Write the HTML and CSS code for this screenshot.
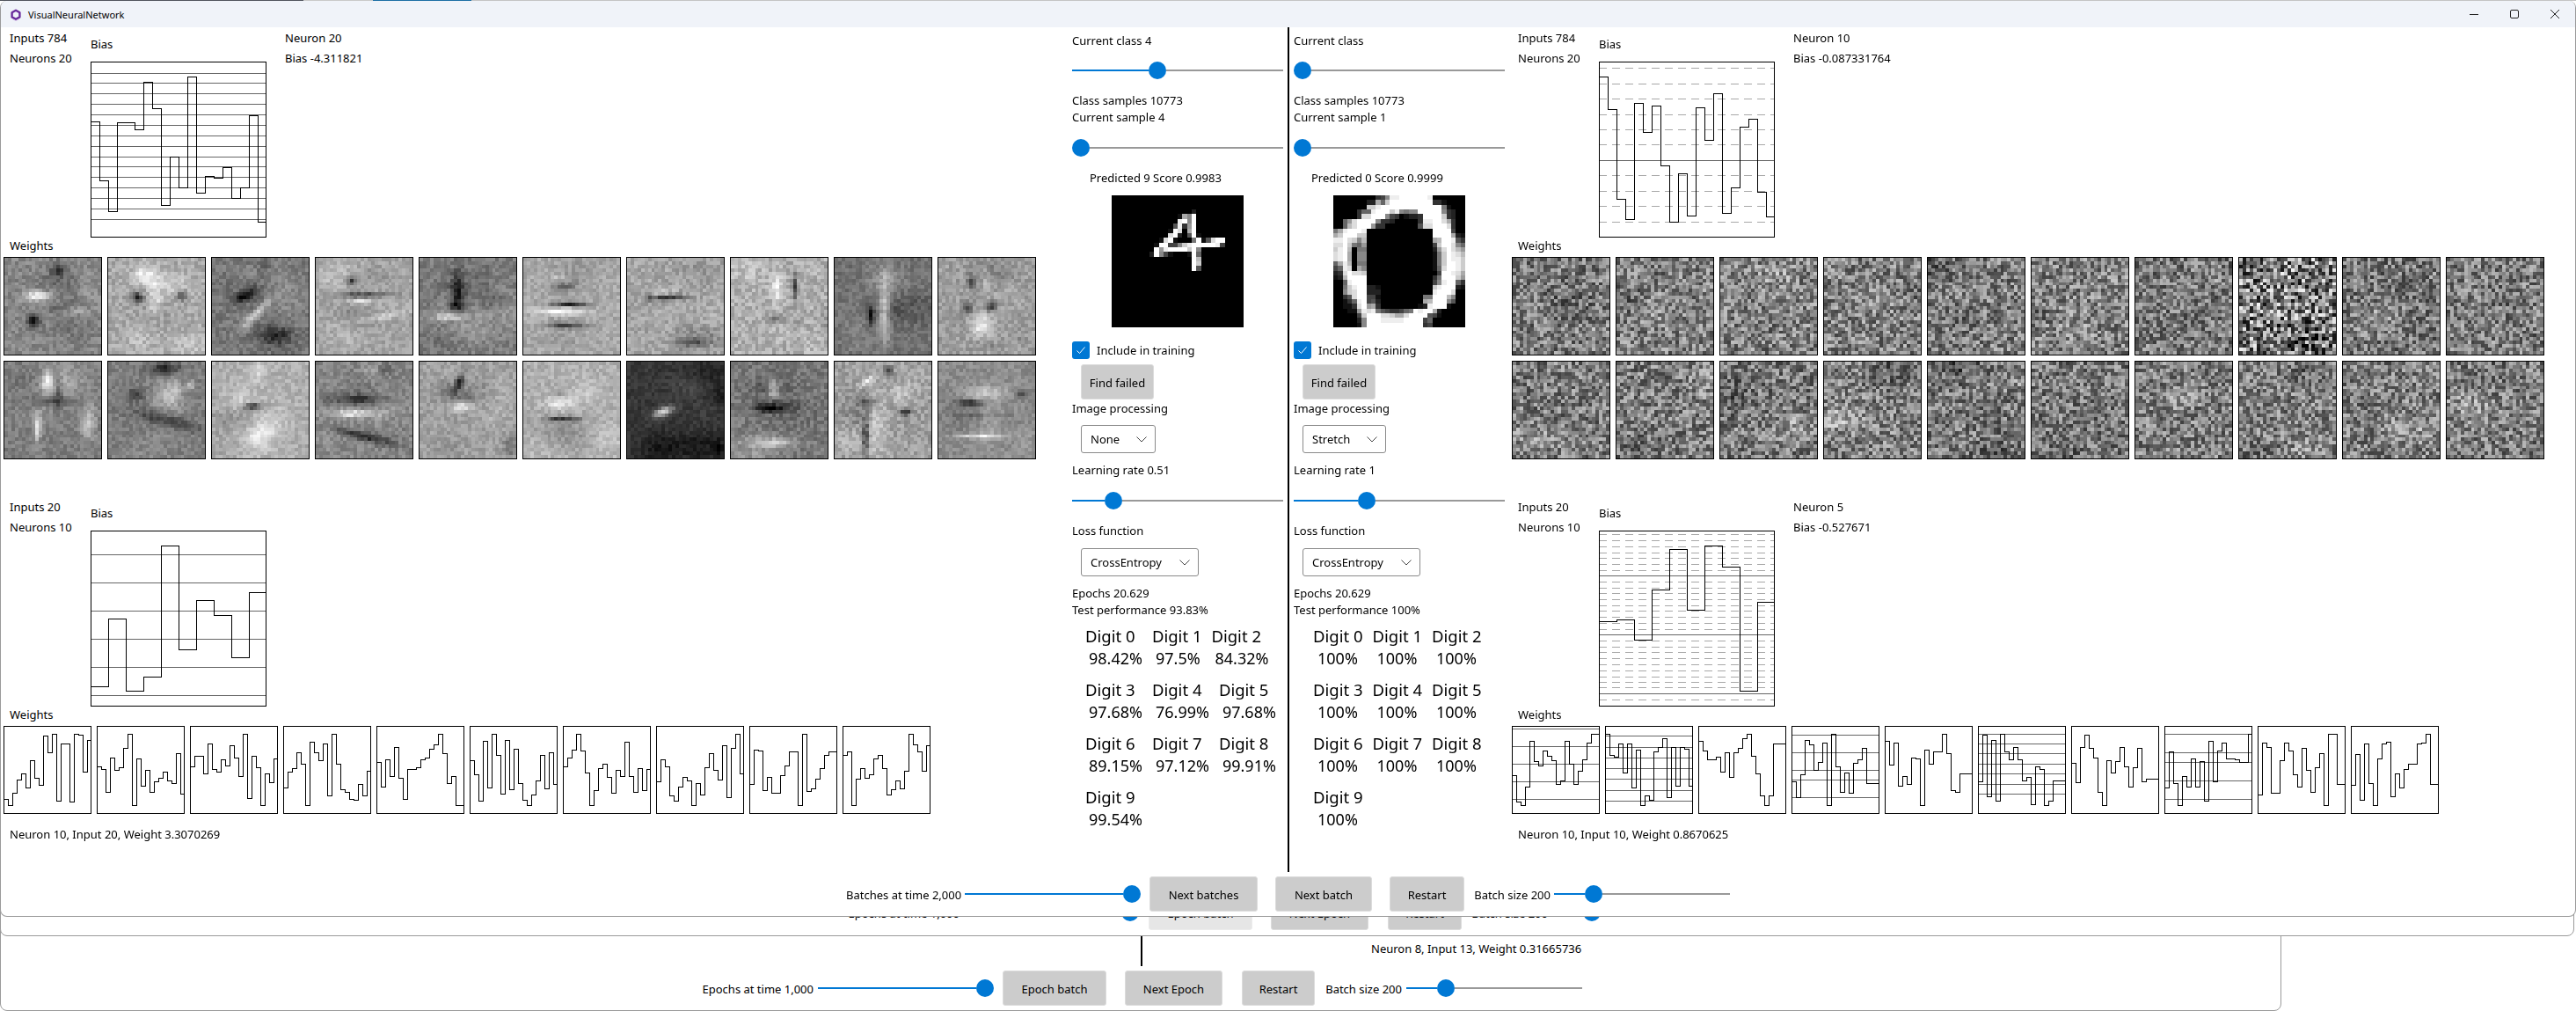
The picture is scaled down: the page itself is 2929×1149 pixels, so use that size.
FILE: index.html
```html
<!DOCTYPE html>
<html lang="en">
<head>
<meta charset="utf-8">
<title>VisualNeuralNetwork</title>
<link rel="stylesheet" href="styles.css">
</head>
<body>
<div class="desktop">

  <section class="window win-back">
    <div class="back-row">
      <div class="back-divider"></div>
      <div class="back-note">Neuron 8, Input 13, Weight 0.31665736</div>
    </div>
    <div class="bar bar-back">
      <span class="bar-label w-epochs">Epochs at time 1,000</span>
      <div class="slider s-200 ml-5"><i class="fill" style="width:180px"></i><i class="thumb"></i><i class="rest"></i></div>
      <button class="btn b-epoch ml-10">Epoch batch</button>
      <button class="btn b-next-epoch ml-21">Next Epoch</button>
      <button class="btn b-restart-back ml-22">Restart</button>
      <span class="bar-label w-batch ml-11">Batch size 200</span>
      <div class="slider s-200 ml-5"><i class="fill" style="width:35px"></i><i class="thumb"></i><i class="rest"></i></div>
    </div>
  </section>

  <section class="window win-mid">
    <div class="bar bar-mid">
      <span class="bar-label w-epochs-mid">Epochs at time 1,000</span>
      <div class="slider s-200 ml-4"><i class="fill" style="width:180px"></i><i class="thumb"></i><i class="rest"></i></div>
      <button class="btn btn-hover b-epoch ml-11">Epoch batch</button>
      <button class="btn b-next-epoch ml-21">Next Epoch</button>
      <button class="btn b-restart-mid ml-22">Restart</button>
      <span class="bar-label w-batch ml-10">Batch size 200</span>
      <div class="slider s-200 ml-5"><i class="fill" style="width:35px"></i><i class="thumb"></i><i class="rest"></i></div>
    </div>
  </section>

  <main class="window win-top">
    <header class="titlebar">
      <svg class="app-icon" viewBox="0 0 14 14" width="14" height="14" aria-hidden="true">
        <path d="M7 1.8 11.4 4.3V9.4L7 11.9 2.6 9.4V4.3Z" fill="none" stroke="#6a2c9c" stroke-width="2.4" stroke-linejoin="round"/>
        <path d="M3 11.6 7 13.6 11 11.6" fill="none" stroke="#d9c8ea" stroke-width="1"/>
      </svg>
      <span class="app-title">VisualNeuralNetwork</span>
      <div class="caption">
        <span class="cap-btn"><svg width="10" height="10" viewBox="0 0 10 10"><path d="M0 5.5H10" stroke="#222"/></svg></span>
        <span class="cap-btn"><svg width="10" height="10" viewBox="0 0 10 10"><rect x="0.5" y="0.5" width="9" height="9" rx="1.5" fill="none" stroke="#222"/></svg></span>
        <span class="cap-btn"><svg width="10" height="10" viewBox="0 0 10 10"><path d="M0 0 10 10M10 0 0 10" stroke="#222" fill="none"/></svg></span>
      </div>
    </header>

    <div class="body">
      <div class="net-panel panel-left">
        <div class="layer-head">
          <div class="head-labels"><div class="stat">Inputs 784</div><div class="stat">Neurons 20</div></div>
          <div class="head-bias"><div class="line">Bias</div><svg class="chart big" id="bias-a"></svg></div>
          <div class="head-neuron"><div class="stat">Neuron 20</div><div class="stat">Bias -4.311821</div></div>
        </div>
        <div class="line weights-label">Weights</div>
        <div class="weight-grid" id="weights-a"></div>
        <div class="layer-head second">
          <div class="head-labels"><div class="stat">Inputs 20</div><div class="stat">Neurons 10</div></div>
          <div class="head-bias"><div class="line">Bias</div><svg class="chart big" id="bias-b"></svg></div>
        </div>
        <div class="line weights-label">Weights</div>
        <div class="mini-row" id="mini-a"></div>
        <div class="line foot-note">Neuron 10, Input 20, Weight 3.3070269</div>
      </div>

      <div class="controls">
        <div class="line m6">Current class 4</div>
        <div class="slider m14"><i class="fill" style="width:87px"></i><i class="thumb"></i><i class="rest"></i></div>
        <div class="line m15">Class samples 10773</div>
        <div class="line">Current sample 4</div>
        <div class="slider m15"><i class="thumb"></i><i class="rest"></i></div>
        <div class="line m15 indent-20">Predicted 9 Score 0.9983</div>
        <canvas class="digit-img" id="digit-four" width="28" height="28"></canvas>
        <label class="check"><span class="box"><svg width="12" height="12" viewBox="0 0 12 12"><path d="M1.5 6.5 4.5 9.5 10.5 2.5" fill="none" stroke="#fff"/></svg></span>Include in training</label>
        <button class="btn b-find">Find failed</button>
        <div class="line m1">Image processing</div>
        <div class="select sel-none">None<svg class="chev" width="12" height="7" viewBox="0 0 12 7"><path d="M.5.5 6 6 11.5.5" fill="none" stroke="#444"/></svg></div>
        <div class="line m10">Learning rate 0.51</div>
        <div class="slider m15"><i class="fill" style="width:37px"></i><i class="thumb"></i><i class="rest"></i></div>
        <div class="line m15">Loss function</div>
        <div class="select sel-loss">CrossEntropy<svg class="chev" width="12" height="7" viewBox="0 0 12 7"><path d="M.5.5 6 6 11.5.5" fill="none" stroke="#444"/></svg></div>
        <div class="line m10">Epochs 20.629</div>
        <div class="line">Test performance 93.83%</div>
        <div class="digits">
          <div class="digit-row">
            <div class="digit"><div class="digit-name">Digit 0</div><div class="digit-pct">98.42%</div></div>
            <div class="digit"><div class="digit-name">Digit 1</div><div class="digit-pct">97.5%</div></div>
            <div class="digit"><div class="digit-name">Digit 2</div><div class="digit-pct">84.32%</div></div>
          </div>
          <div class="digit-row">
            <div class="digit"><div class="digit-name">Digit 3</div><div class="digit-pct">97.68%</div></div>
            <div class="digit"><div class="digit-name">Digit 4</div><div class="digit-pct">76.99%</div></div>
            <div class="digit"><div class="digit-name">Digit 5</div><div class="digit-pct">97.68%</div></div>
          </div>
          <div class="digit-row">
            <div class="digit"><div class="digit-name">Digit 6</div><div class="digit-pct">89.15%</div></div>
            <div class="digit"><div class="digit-name">Digit 7</div><div class="digit-pct">97.12%</div></div>
            <div class="digit"><div class="digit-name">Digit 8</div><div class="digit-pct">99.91%</div></div>
          </div>
          <div class="digit-row">
            <div class="digit"><div class="digit-name">Digit 9</div><div class="digit-pct">99.54%</div></div>
          </div>
        </div>
      </div>

      <div class="divider"></div>

      <div class="controls">
        <div class="line m6">Current class</div>
        <div class="slider m14"><i class="thumb"></i><i class="rest"></i></div>
        <div class="line m15">Class samples 10773</div>
        <div class="line">Current sample 1</div>
        <div class="slider m15"><i class="thumb"></i><i class="rest"></i></div>
        <div class="line m15 indent-20">Predicted 0 Score 0.9999</div>
        <canvas class="digit-img" id="digit-zero" width="28" height="28"></canvas>
        <label class="check"><span class="box"><svg width="12" height="12" viewBox="0 0 12 12"><path d="M1.5 6.5 4.5 9.5 10.5 2.5" fill="none" stroke="#fff"/></svg></span>Include in training</label>
        <button class="btn b-find">Find failed</button>
        <div class="line m1">Image processing</div>
        <div class="select sel-stretch">Stretch<svg class="chev" width="12" height="7" viewBox="0 0 12 7"><path d="M.5.5 6 6 11.5.5" fill="none" stroke="#444"/></svg></div>
        <div class="line m10">Learning rate 1</div>
        <div class="slider m15"><i class="fill" style="width:73px"></i><i class="thumb"></i><i class="rest"></i></div>
        <div class="line m15">Loss function</div>
        <div class="select sel-loss">CrossEntropy<svg class="chev" width="12" height="7" viewBox="0 0 12 7"><path d="M.5.5 6 6 11.5.5" fill="none" stroke="#444"/></svg></div>
        <div class="line m10">Epochs 20.629</div>
        <div class="line">Test performance 100%</div>
        <div class="digits digits-right">
          <div class="digit-row">
            <div class="digit"><div class="digit-name">Digit 0</div><div class="digit-pct wide">100%</div></div>
            <div class="digit"><div class="digit-name">Digit 1</div><div class="digit-pct wide">100%</div></div>
            <div class="digit"><div class="digit-name">Digit 2</div><div class="digit-pct wide">100%</div></div>
          </div>
          <div class="digit-row">
            <div class="digit"><div class="digit-name">Digit 3</div><div class="digit-pct wide">100%</div></div>
            <div class="digit"><div class="digit-name">Digit 4</div><div class="digit-pct wide">100%</div></div>
            <div class="digit"><div class="digit-name">Digit 5</div><div class="digit-pct wide">100%</div></div>
          </div>
          <div class="digit-row">
            <div class="digit"><div class="digit-name">Digit 6</div><div class="digit-pct wide">100%</div></div>
            <div class="digit"><div class="digit-name">Digit 7</div><div class="digit-pct wide">100%</div></div>
            <div class="digit"><div class="digit-name">Digit 8</div><div class="digit-pct wide">100%</div></div>
          </div>
          <div class="digit-row">
            <div class="digit"><div class="digit-name">Digit 9</div><div class="digit-pct wide">100%</div></div>
          </div>
        </div>
      </div>

      <div class="net-panel panel-right">
        <div class="layer-head">
          <div class="head-labels"><div class="stat">Inputs 784</div><div class="stat">Neurons 20</div></div>
          <div class="head-bias"><div class="line">Bias</div><svg class="chart big" id="bias-c"></svg></div>
          <div class="head-neuron"><div class="stat">Neuron 10</div><div class="stat">Bias -0.087331764</div></div>
        </div>
        <div class="line weights-label">Weights</div>
        <div class="weight-grid" id="weights-b"></div>
        <div class="layer-head second">
          <div class="head-labels"><div class="stat">Inputs 20</div><div class="stat">Neurons 10</div></div>
          <div class="head-bias"><div class="line">Bias</div><svg class="chart big" id="bias-d"></svg></div>
          <div class="head-neuron"><div class="stat">Neuron 5</div><div class="stat">Bias -0.527671</div></div>
        </div>
        <div class="line weights-label">Weights</div>
        <div class="mini-row" id="mini-b"></div>
        <div class="line foot-note">Neuron 10, Input 10, Weight 0.8670625</div>
      </div>
    </div>

    <div class="bar bar-top">
      <span class="bar-label w-batches">Batches at time 2,000</span>
      <div class="slider s-200 ml-4"><i class="fill" style="width:180px"></i><i class="thumb"></i><i class="rest"></i></div>
      <button class="btn b-next-batches ml-10">Next batches</button>
      <button class="btn b-next-batch ml-20">Next batch</button>
      <button class="btn b-restart ml-20">Restart</button>
      <span class="bar-label w-batch ml-10">Batch size 200</span>
      <div class="slider s-200 ml-4"><i class="fill" style="width:35px"></i><i class="thumb"></i><i class="rest"></i></div>
    </div>
  </main>
</div>
<script src="script.js"></script>
</body>
</html>
```
FILE: styles.css
```css
* { box-sizing: border-box; }
html, body { margin: 0; padding: 0; height: 100%; }
body {
  font-family: "Noto Sans", "Open Sans", sans-serif;
  font-size: 13px;
  color: #000;
  background: #fff;
  overflow: hidden;
}
.desktop {
  position: relative;
  width: 2929px;
  height: 1149px;
  background:
    linear-gradient(to right, #50535c 0 345px, #c9c9c9 345px 424px, #1c6ea4 424px 536px, #c4c4c4 536px 100%) top left / 100% 1px no-repeat,
    #fff;
  overflow: hidden;
}

/* windows on the desktop */
.window {
  position: absolute;
  display: flex;
  flex-direction: column;
  justify-content: flex-end;
  background: #fff;
  border: 1px solid #9a9a9a;
  border-radius: 8px;
}
.win-top  { left: 0; top: 1px; width: 2929px; height: 1041px; border-width: 0 1px 1px 1px; overflow: hidden; }
.win-mid  { left: 0; top: 20px; width: 2927px; height: 1044px; }
.win-back { left: 0; top: 40px; width: 2594px; height: 1109px; }

/* title bar */
.titlebar {
  flex: 0 0 30px;
  display: flex;
  align-items: center;
  padding-left: 10px;
  background: #f0f3f9;
}
.app-icon { flex: none; margin-top: 1px; }
.app-title { margin-left: 7px; font-size: 11px; }
.caption { margin-left: auto; display: flex; }
.cap-btn { width: 46px; height: 30px; display: flex; align-items: center; justify-content: center; }

/* body */
.body { flex: 1 1 0; display: flex; min-height: 0; }
.panel-left  { flex: 0 0 1218px; padding-left: 3px; }
.panel-right { flex: 1 1 0; padding-left: 8px; }
.controls { flex: 0 0 240px; display: flex; flex-direction: column; align-items: flex-start; }
.divider { flex: 0 0 2px; margin: 0 5px; background: #000; }

.line { line-height: 19px; height: 19px; white-space: nowrap; }
.stat { height: 23px; line-height: 23px; white-space: nowrap; }

.layer-head { display: flex; align-items: flex-start; padding: 1px 0 0 7px; height: 239px; }
.layer-head.second { margin-top: 42px; }
.head-labels { flex: 0 0 92px; }
.head-bias { flex: 0 0 200px; padding-top: 9px; }
.head-neuron { margin-left: 21px; }
.chart { display: block; }
.chart.big { width: 200px; height: 200px; margin-top: 10px; }
.chart.mini { width: 100px; height: 100px; flex: none; }

.weights-label { margin-left: 7px; }
.weight-grid { display: grid; grid-template-columns: repeat(10, 112px); gap: 6px; margin-top: 3px; }
.weight-cell { width: 112px; height: 112px; border: 1px solid #000; display: block; }
.weight-cell canvas { display: block; width: 110px; height: 110px; image-rendering: pixelated; }
.mini-row { display: flex; gap: 6px; margin-top: 3px; }
.foot-note { margin: 14px 0 0 7px; }

/* form controls */
.m1  { margin-top: 1px; }
.m6  { margin-top: 6px; }
.m10 { margin-top: 10px; }
.m14 { margin-top: 14px; }
.m15 { margin-top: 15px; }
.indent-20 { margin-left: 20px; }

.slider { flex: none; display: flex; align-items: center; width: 240px; height: 20px; }
.s-200 { width: 200px; }
.fill { flex: none; height: 2px; background: #0078d4; }
.rest { flex: 1 1 0; height: 2px; background: #999; }
.thumb { flex: none; width: 20px; height: 20px; border-radius: 50%; background: #0078d4; }

.digit-img { display: block; width: 150px; height: 150px; margin: 10px 0 0 45px; image-rendering: pixelated; background: #000; }

.check { display: flex; align-items: center; height: 20px; margin-top: 16px; white-space: nowrap; }
.box { width: 20px; height: 20px; margin-right: 8px; border-radius: 3px; background: #0078d4; display: flex; align-items: center; justify-content: center; }

.btn {
  flex: none;
  height: 40px;
  padding: 2px 0 0;
  font: inherit;
  color: #000;
  background: #ccc;
  border: 1px solid #dcdcdc;
  border-radius: 3px;
}
.btn-hover { background: #e6e6e6; border-color: #ececec; }
.b-find { width: 83px; margin: 6px 0 0 10px; }
.b-next-batches { width: 123px; }
.b-next-batch { width: 110px; }
.b-restart { width: 85px; }
.b-epoch { width: 118px; }
.b-next-epoch { width: 111px; }
.b-restart-mid { width: 84px; }
.b-restart-back { width: 83px; }

.select {
  display: flex;
  align-items: center;
  justify-content: space-between;
  height: 32px;
  margin: 9px 0 0 10px;
  padding: 0 9px 0 10px;
  border: 1px solid #8a8a8a;
  border-radius: 3px;
  background: #fff;
}
.sel-none { width: 85px; }
.sel-stretch { width: 95px; }
.sel-loss { width: 134px; margin-top: 10px; }
.chev { flex: none; }

.digits { margin: 7px 0 0 15px; font-size: 18.5px; }
.digits-right { margin-left: 22px; }
.digit-row { display: flex; gap: 11px; height: 61px; }
.digit-name { height: 26px; line-height: 26px; white-space: nowrap; }
.digit-pct { height: 25px; line-height: 25px; margin-left: 4px; white-space: nowrap; font-size: 18px; }
.digit-pct.wide { margin-left: 5px; }

/* bottom bars */
.bar { flex: none; display: flex; align-items: center; height: 50px; }
.bar-top  { padding-left: 961px; }
.bar-mid  { padding-left: 961px; height: 52px; }
.bar-back { padding-left: 796px; }
.bar-label { flex: none; padding-top: 2px; white-space: nowrap; text-align: right; }
.w-batches { width: 131px; }
.w-epochs { width: 128px; }
.w-epochs-mid { width: 129px; }
.w-batch { width: 88px; }
.ml-4 { margin-left: 4px; }
.ml-5 { margin-left: 5px; }
.ml-10 { margin-left: 10px; }
.ml-11 { margin-left: 11px; }
.ml-20 { margin-left: 20px; }
.ml-21 { margin-left: 21px; }
.ml-22 { margin-left: 22px; }

.back-row { flex: none; display: flex; height: 35px; }
.back-divider { width: 2px; margin-left: 1296px; background: #000; }
.back-note { margin: 6px 0 0 260px; line-height: 19px; white-space: nowrap; }
```
FILE: script.js
```js
(function () {
  var SVG = "http://www.w3.org/2000/svg";

  function seeded(seed) {
    return function () {
      seed |= 0; seed = seed + 0x6D2B79F5 | 0;
      var t = Math.imul(seed ^ seed >>> 15, 1 | seed);
      t = t + Math.imul(t ^ t >>> 7, 61 | t) ^ t;
      return ((t ^ t >>> 14) >>> 0) / 4294967296;
    };
  }

  function add(parent, name, attrs) {
    var el = document.createElementNS(SVG, name);
    for (var k in attrs) el.setAttribute(k, attrs[k]);
    parent.appendChild(el);
    return el;
  }

  function drawChart(svg, size, values, solid, dashed) {
    svg.setAttribute("viewBox", "0 0 " + size + " " + size);
    svg.setAttribute("shape-rendering", "crispEdges");
    (dashed || []).forEach(function (y) {
      add(svg, "line", { x1: 0, x2: size, y1: y + 0.5, y2: y + 0.5, stroke: "#a8a8a8", "stroke-dasharray": "9 6" });
    });
    (solid || []).forEach(function (y) {
      add(svg, "line", { x1: 0, x2: size, y1: y + 0.5, y2: y + 0.5, stroke: "#666" });
    });
    var step = size / values.length, d = "";
    values.forEach(function (v, i) {
      d += (i ? "L" : "M") + (i * step + 0.5) + " " + (v + 0.5) + "H" + ((i + 1) * step + 0.5);
    });
    add(svg, "path", { d: d, fill: "none", stroke: "#000" });
    add(svg, "rect", { x: 0.5, y: 0.5, width: size - 1, height: size - 1, fill: "none", stroke: "#000" });
  }

  drawChart(document.getElementById("bias-a"), 200,
    [68, 135, 170, 69, 69, 77, 23, 53, 163, 108, 143, 17, 149, 130, 132, 120, 155, 143, 61, 182],
    [13, 24, 36, 48, 60, 72, 84, 96, 108, 119, 131, 143, 155, 167, 179]);
  drawChart(document.getElementById("bias-b"), 200,
    [177, 100, 182, 166, 17, 135, 79, 96, 144, 70],
    [27, 59, 91, 123, 155, 187]);
  drawChart(document.getElementById("bias-c"), 200,
    [17, 54, 156, 179, 47, 80, 50, 118, 182, 127, 175, 52, 89, 36, 172, 143, 74, 65, 148, 176],
    [112], [7, 25, 42, 60, 77, 94, 129, 147, 164, 182]);
  drawChart(document.getElementById("bias-d"), 200,
    [103, 101, 124, 67, 21, 90, 17, 41, 182, 81],
    [51, 118, 185],
    [4, 11, 18, 25, 31, 38, 45, 58, 65, 71, 78, 85, 91, 98, 105, 112, 125, 132, 138, 145, 152, 159, 166, 172, 178, 192]);

  var miniLeft = [
    [83,90,76,61,54,70,39,59,67,11,30,9,85,20,20,86,9,10,52,16],
    [46,49,75,36,50,47,25,9,90,37,68,50,75,63,59,52,62,65,31,77],
    [46,34,34,54,20,49,52,38,45,22,36,57,9,82,34,47,90,54,64,37],
    [70,52,48,30,43,90,18,30,39,20,79,9,43,72,75,83,84,66,79,51],
    [41,69,38,57,24,59,83,49,49,47,38,36,26,21,9,31,65,57,90,90],
    [39,55,85,17,70,9,33,77,16,72,26,65,84,90,78,62,33,71,30,66],
    [46,36,27,9,28,53,90,73,48,43,58,76,50,57,18,57,75,48,73,49],
    [63,38,46,79,85,69,58,62,90,65,78,47,31,50,61,22,81,25,9,54],
    [66,27,28,73,58,76,76,56,45,29,29,90,9,74,71,60,48,33,29,29],
    [33,29,90,60,48,59,55,37,33,48,78,72,62,71,51,9,21,29,51,22]
  ];
  var miniRight = [
    { v: [56,86,90,69,17,40,45,28,34,39,66,62,17,43,66,51,38,19,9,9], g: [3,23,43,63,83] },
    { v: [9,33,35,20,53,20,70,27,90,79,84,29,24,14,81,24,68,24,26,68], g: [11,24,36,48,60,73,85] },
    { v: [17,28,38,38,35,52,30,58,30,25,14,9,34,54,79,90,79,20,20,20], g: [] },
    { v: [63,81,55,16,21,50,41,19,90,9,46,75,53,76,42,38,25,65,65,65], g: [10,30,50,61,81] },
    { v: [17,44,19,68,57,66,36,37,90,27,43,29,29,9,31,73,75,54,54,54], g: [] },
    { v: [63,10,80,16,85,9,29,38,24,38,62,58,89,46,49,90,85,62,62,62], g: [9,20,31,43,54,66,77] },
    { v: [42,64,24,10,25,36,75,90,39,53,40,24,46,69,47,25,63,60,60,60], g: [] },
    { v: [70,29,65,90,57,69,37,69,40,85,17,63,28,19,37,37,38,41,41,9], g: [9,30,41,62,83] },
    { v: [78,19,24,76,76,39,19,28,55,69,25,50,75,47,31,90,9,9,66,66], g: [] },
    { v: [67,32,84,20,65,90,37,20,18,80,54,70,49,43,43,20,19,9,66,66], g: [] }
  ];
  function addMini(host, values, grid) {
    var svg = document.createElementNS(SVG, "svg");
    svg.setAttribute("class", "chart mini");
    host.appendChild(svg);
    drawChart(svg, 100, values, grid);
  }
  var miniA = document.getElementById("mini-a"), miniB = document.getElementById("mini-b");
  miniLeft.forEach(function (v) { addMini(miniA, v, []); });
  miniRight.forEach(function (m) { addMini(miniB, m.v, m.g); });

  /* each weight map: base grey, noise amplitude, then features [col, row, sx, sy, amplitude, angle] */
  var trained = [
    [135, 22, [9,10.5,4,1.5,110,0],[8,17.5,2,2,-110,0],[15,3,2,2,-70,0],[20,15,3,1,40,0],[14,14,3,1,-30,0]],
    [170, 24, [10,4.5,3,3,60,0],[13,11,2,5,60,0],[8,11,1.5,1.5,-110,0],[21,10.5,1.5,1.5,-110,0],[8,23,4,3,20,0]],
    [120, 22, [9,10.5,3,1.5,-100,-30],[12,16,6,1.2,90,-45],[18,22,5,3,-80,0],[14,3,1.5,4,-30,20]],
    [165, 20, [10,6,1.2,1.2,-120,0],[14,10.3,8,.7,-90,0],[12,12.3,3,.6,90,0],[16,17,10,1,40,-10],[14,5,6,3,-25,0]],
    [125, 22, [10.5,9,1.5,6,-80,0],[10,13.5,2,1,-60,0],[20,12,4,2,-40,0],[8,16.5,5,.8,100,0],[13,20,8,4,30,0]],
    [170, 20, [13,13,5,.6,-130,0],[10,15,7,1,90,0],[12,19,5,.7,-100,0],[11,8,3,1,-50,0],[10,5,2,1,40,0]],
    [165, 24, [11,11,5,.8,-110,0],[10,9.5,3,.6,70,0],[18,24,5,1,-70,0],[6,11.5,1,1,-60,0]],
    [175, 28, [13,9,1.5,4,70,0],[18,8,.7,3.5,-130,0],[12,17,3,1,-50,0]],
    [115, 20, [14,15,1.5,10,80,0],[10,16,1,3,-90,0],[17,15,3,3,-30,0],[14,5,5,3,15,0]],
    [160, 24, [9,6.5,1,2,-80,0],[8,14,1.5,1.5,-90,0],[15,13.5,1.5,1.5,-100,0],[12,19,3,3,80,0],[13,6,1,5,30,0],[14,25,3,1,-30,0]],
    [125, 20, [12,5.5,1.5,3,100,0],[15,8,1,5,-50,0],[14,11,7,1.2,-50,0],[9,19,1,4,90,0],[24,17,2,5,70,0]],
    [125, 20, [16,1.5,4,1.5,-100,0],[18,8,3,4,60,0],[23.5,6.5,.8,1.5,80,0],[8,9,3,2,-60,0],[17,16.5,9,2,-80,15]],
    [175, 20, [13,3,2,3,40,0],[11.5,12.5,3,1,-140,0],[14,20,7,5,60,-35],[8,9,3,3,20,0]],
    [135, 22, [10,14.5,7,1,100,0],[12,10.5,7,1.5,-80,0],[13,21,8,1.3,-100,15],[15,3,3,3,30,0],[20,1.5,2,1.5,-40,0]],
    [160, 20, [11,5.5,1,3,-120,25],[11.5,12.5,3,1.5,80,0],[12,10,3,1,-40,0],[20,15,4,3,20,0],[26,24,2,3,-50,0]],
    [175, 20, [10,11.5,4,2,60,0],[11,16,5,.7,-110,0],[18,8,4,4,25,0],[10,9,2,1,-30,0],[12,20,12,4,-30,0]],
    [55, 14, [10,14,3,1.2,150,-20],[20,24,8,4,-30,0],[26,25,1,3,-40,0]],
    [120, 24, [12,7,2,2.5,90,0],[11,13,5,1.2,-110,0],[12,9.5,4,.6,60,0],[12,23,6,1.3,70,0]],
    [160, 26, [8.5,21,.8,5,-110,0],[12,18,2.5,9,45,0],[20,14,2,1,-110,0],[9,11,3,.8,-70,0],[9,5,3,1,70,-30],[15,2,1,1.2,-110,0],[18,9,3,3,30,0]],
    [140, 18, [9,11.5,3.5,.7,-120,0],[13,8.5,6,2,60,0],[12,21,7,.7,90,0],[24,9,2,1,-60,0],[12,15,8,.8,-25,0]]
  ];

  function paintMap(canvas, base, noise, features, rnd) {
    var ctx = canvas.getContext("2d"), img = ctx.createImageData(28, 28), p = 0;
    for (var r = 0; r < 28; r++) {
      for (var c = 0; c < 28; c++) {
        var v = base + (rnd() - 0.5) * 2 * noise;
        features.forEach(function (f) {
          var a = (f[5] || 0) * Math.PI / 180, dx = c - f[0], dy = r - f[1];
          var u = dx * Math.cos(a) + dy * Math.sin(a), w = -dx * Math.sin(a) + dy * Math.cos(a);
          v += f[4] * Math.exp(-(u * u) / (f[2] * f[2]) - (w * w) / (f[3] * f[3]));
        });
        v = Math.max(0, Math.min(255, Math.round(v)));
        img.data[p++] = v; img.data[p++] = v; img.data[p++] = v; img.data[p++] = 255;
      }
    }
    ctx.putImageData(img, 0, 0);
  }

  function addCell(host) {
    var cell = document.createElement("div"), cv = document.createElement("canvas");
    cell.className = "weight-cell";
    cv.width = 28; cv.height = 28;
    cell.appendChild(cv);
    host.appendChild(cell);
    return cv;
  }

  var rnd = seeded(20240);
  var gridA = document.getElementById("weights-a"), gridB = document.getElementById("weights-b");
  trained.forEach(function (t) {
    var extra = [];
    for (var k = 0; k < 6; k++) {
      extra.push([3 + rnd() * 22, 3 + rnd() * 22, 3 + rnd() * 4, 2 + rnd() * 4, (rnd() - 0.5) * 60, 0]);
    }
    paintMap(addCell(gridA), t[0], t[1], t.slice(2).concat(extra), rnd);
  });
  for (var i = 0; i < 20; i++) {
    var feats = [
      [rnd() * 28, rnd() * 12, 6, 4, (rnd() - 0.6) * 70, 0],
      [rnd() * 28, 12 + rnd() * 16, 7, 4, (rnd() - 0.4) * 70, 0],
      [rnd() * 28, rnd() * 28, 4, 3, (rnd() - 0.5) * 60, 0]
    ];
    paintMap(addCell(gridB), 118 + rnd() * 14, i === 7 ? 115 : 66, feats, rnd);
  }

  /* the two sample digits, one hex digit per pixel */
  var Z = function (n) { return new Array(n + 1).join("0"); };
  var four = {
    3: Z(17) + "2",
    4: Z(14) + "1a8f",
    5: Z(14) + "ef8f",
    6: Z(13) + "5e39f",
    7: Z(12) + "1fd0af",
    8: Z(12) + "df205f1",
    9: Z(10) + "1df10007f15dff",
    10: Z(9) + "1ff448cefffffe4",
    11: Z(9) + "f9effffcf8",
    12: Z(8) + "2f841000" + "1f6",
    13: Z(17) + "fb",
    14: Z(17) + "fc",
    15: Z(17) + "f5"
  };
  var zero = [
    "000000000348eeffffffe",
    Z(7) + "22a6c" + "fffffffff" + "331",
    Z(7) + "cce" + "fffffffffffff" + "71",
    "00000366efffce8788" + "fffff832",
    "000003ddfff843" + "0122" + "3ffffc32",
    "0069dffff8332" + Z(5) + "3eeffda3",
    "006bdfff933" + Z(7) + "5ddfffd3",
    "7aefffe" + Z(14) + "ffff4",
    "acfffcc" + Z(14) + "ffffa21",
    "eefdc8b" + Z(14) + "abffe53",
    "ddfc769" + Z(14) + "4cffd86",
    "cefb077" + Z(14) + "29dfdb9",
    "defa088" + Z(14) + "17cfedb",
    "defa088" + Z(14) + "17cfeec",
    "6aeb077" + Z(14) + "17cffec",
    "46ed0a8" + Z(14) + "16dffec",
    "23dfddc" + Z(15) + "4ffeda",
    "12bffff" + Z(14) + "37fffc9",
    "006efff" + Z(14) + "48eff63",
    "007ceff221" + Z(11) + "cefff21",
    "008cdff222" + Z(11) + "efffd",
    "0035dff441" + Z(9) + "77fffb8",
    "00136ef452" + Z(9) + "abfff85",
    "00113df9a3" + Z(8) + "12efff1",
    "000119ede7" + "54334" + "67fe" + "ffa2",
    "000004cfffddcaadffff541",
    "0000028fffeeeeeffff46",
    "0000018ffffffffffff34"
  ];
  function paintDigit(id, rowAt) {
    var cv = document.getElementById(id), ctx = cv.getContext("2d"), img = ctx.createImageData(28, 28), p = 0;
    for (var r = 0; r < 28; r++) {
      var s = rowAt(r) || "";
      for (var c = 0; c < 28; c++) {
        var v = parseInt(s.charAt(c) || "0", 16) * 17;
        img.data[p++] = v; img.data[p++] = v; img.data[p++] = v; img.data[p++] = 255;
      }
    }
    ctx.putImageData(img, 0, 0);
  }
  paintDigit("digit-four", function (r) { return four[r]; });
  paintDigit("digit-zero", function (r) { return zero[r]; });
})();
```
